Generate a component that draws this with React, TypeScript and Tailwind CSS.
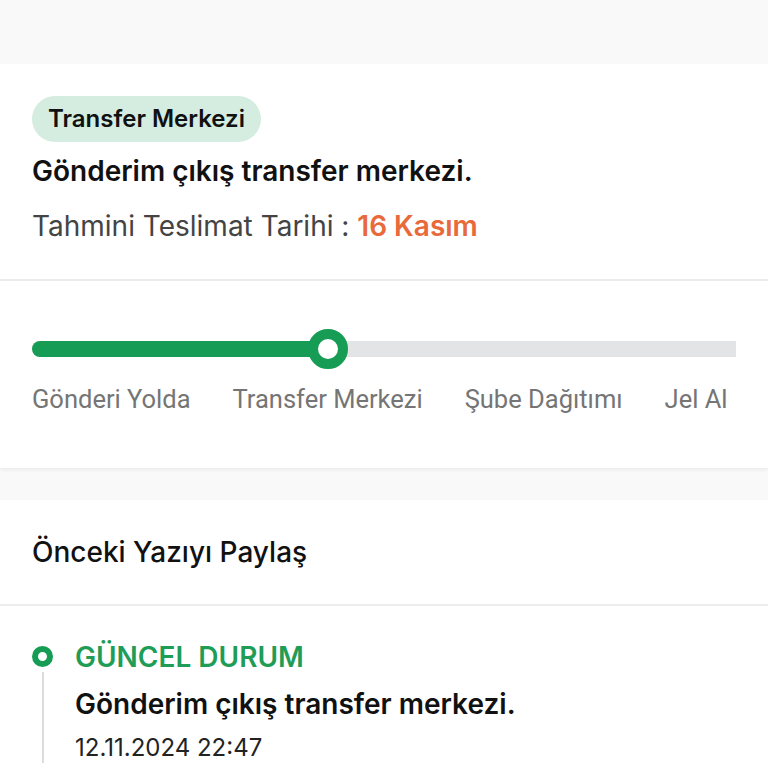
const steps = ['Gönderi Yolda', 'Transfer Merkezi', 'Şube Dağıtımı', 'Jel Al'];

const ProgressTrack = ({ percent }: { percent: number }) => {
  return (
    <div className="relative h-10 flex items-center">
      <div className="h-4 w-full rounded-l-full bg-[#e3e4e6]">
        <div className="h-4 rounded-l-full bg-[#169c55]" style={{ width: `${percent}%` }}></div>
      </div>
      <div
        className="absolute top-0 h-10 w-10 -translate-x-1/2 rounded-full border-[10px] border-[#169c55] bg-white"
        style={{ left: `${percent}%` }}
      ></div>
    </div>
  );
};

const App = () => {
  return (
    <div className="min-h-screen bg-[#f9f9f9] font-['Inter',sans-serif] text-[#111]">
      <div className="h-16"></div>

      <div className="bg-white shadow-[0_2px_4px_rgba(0,0,0,0.06)]">
        <section className="h-[217px] border-b-2 border-[#ececec] px-8 pt-8">
          <span className="inline-flex h-[46px] items-center rounded-full bg-[#d4ede0] px-4 text-[24px] font-semibold text-[#111]">
            Transfer Merkezi
          </span>
          <h2 className="mt-3 text-[28px] leading-[34px] font-semibold">Gönderim çıkış transfer merkezi.</h2>
          <p className="mt-[21px] text-[28px] leading-[34px] text-[#444]">
            Tahmini Teslimat Tarihi : <span className="font-semibold text-[#e8693a]">16 Kasım</span>
          </p>
        </section>

        <section className="h-[187px] px-8 pt-12">
          <ProgressTrack percent={42} />
          <div className="mt-[14px] flex gap-[42px] font-['Roboto',sans-serif] text-[25.5px] leading-8 whitespace-nowrap text-[#757575]">
            {steps.map((step) => (
              <span key={step}>{step}</span>
            ))}
          </div>
        </section>
      </div>

      <div className="h-8"></div>

      <div className="bg-white">
        <div className="flex h-[106px] items-center border-b-2 border-[#ececec] px-8 text-[28px] font-medium">
          Önceki Yazıyı Paylaş
        </div>

        <div className="flex gap-[22px] px-8 pt-[34px] pb-6">
          <div className="flex w-[21px] flex-col items-center">
            <div className="mt-[6px] h-[21px] w-[21px] rounded-full border-[6px] border-[#169c55]"></div>
            <div className="mt-[5px] w-[2px] flex-1 bg-[#dcdcdc]"></div>
          </div>
          <div>
            <div className="text-[28px] leading-[34px] font-semibold text-[#1f9d57]">GÜNCEL DURUM</div>
            <div className="mt-[13px] text-[28px] leading-[34px] font-semibold">Gönderim çıkış transfer merkezi.</div>
            <div className="mt-3 text-[24px] leading-[30px] text-[#222]">12.11.2024 22:47</div>
          </div>
        </div>
      </div>
    </div>
  );
};

export default App;
